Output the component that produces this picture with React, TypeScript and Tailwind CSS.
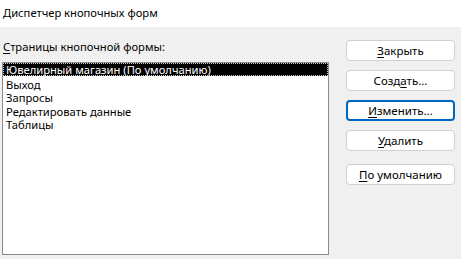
const pages = [
  'Ювелирный магазин (По умолчанию)',
  'Выход',
  'Запросы',
  'Редактировать данные',
  'Таблицы',
]

function Btn({ children, focused }: { children: React.ReactNode; focused?: boolean }) {
  return (
    <button
      className={
        'h-[21px] w-[109px] rounded-[4px] bg-white text-[11.5px] leading-none text-black ' +
        (focused ? 'border-2 border-[#0067c0]' : 'border border-[#d0d0d0]')
      }
    >
      {children}
    </button>
  )
}

export default function App() {
  return (
    <div
      className="w-[461px] h-[259px] bg-[#f0f0f0] flex flex-col overflow-hidden"
      style={{ fontFamily: '"Noto Sans", sans-serif' }}
    >
      {/* Title */}
      <div className="h-[27px] bg-white pl-[3px] pt-[5px] text-[11.2px] leading-[16px] text-black">
        Диспетчер кнопочных форм
      </div>

      <div className="flex flex-1">
        {/* Left column */}
        <div className="flex flex-col pl-[2px]">
          <div className="h-[35px] pl-[1px] pt-[12px] text-[11.2px] leading-[16px] text-black">
            <span className="underline underline-offset-2">С</span>траницы кнопочной формы:
          </div>
          <div className="w-[327px] h-[193px] border border-[#868a92] bg-white text-[11.2px]">
            <div className="h-[13px] bg-black text-white pl-[2px] border border-dotted border-[#cfcfcf] leading-[11px]">
              {pages[0]}
            </div>
            <div className="pt-[2px]">
              {pages.slice(1).map((p) => (
                <div key={p} className="pl-[3px] h-[13.33px] leading-[13.33px] text-black">
                  {p}
                </div>
              ))}
            </div>
          </div>
        </div>

        {/* Buttons */}
        <div className="flex flex-col gap-[9px] pl-[17px] pt-[13px]">
          <Btn>
            <span className="underline underline-offset-2">З</span>акрыть
          </Btn>
          <Btn>
            Созд<span className="underline underline-offset-2">а</span>ть...
          </Btn>
          <Btn focused>
            <span className="underline underline-offset-2">И</span>зменить...
          </Btn>
          <Btn>
            <span className="underline underline-offset-2">У</span>далить
          </Btn>
          <div className="pt-[1px]">
            <Btn>
              <span className="underline underline-offset-2">П</span>о умолчанию
            </Btn>
          </div>
        </div>
      </div>
    </div>
  )
}
